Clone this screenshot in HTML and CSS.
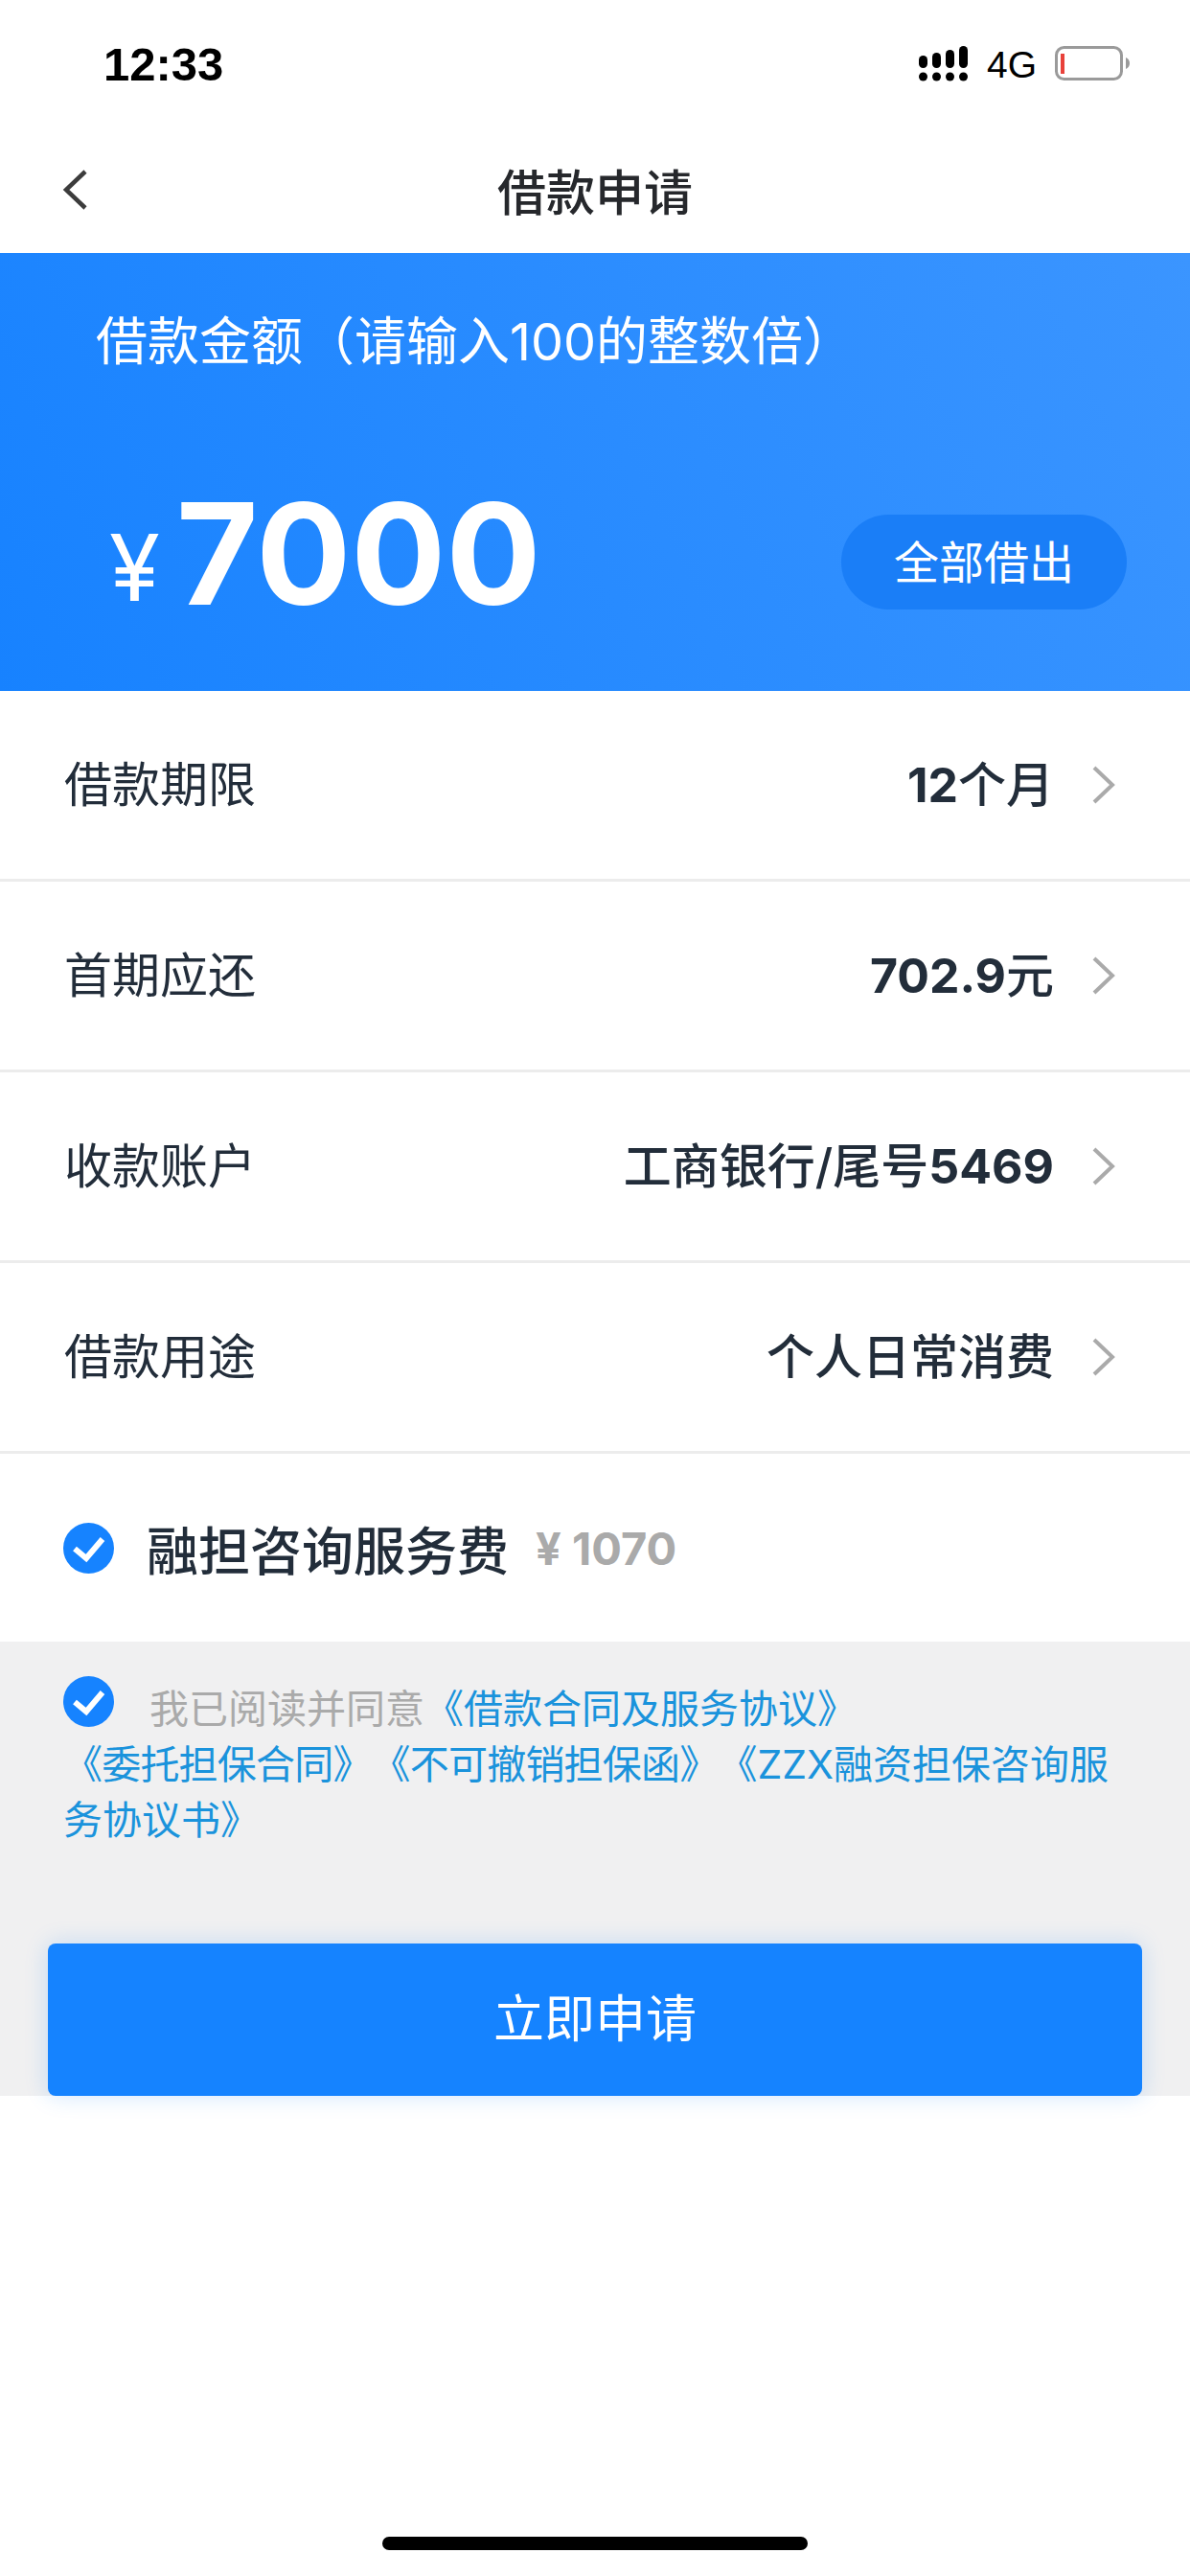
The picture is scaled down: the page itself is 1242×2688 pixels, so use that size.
FILE: index.html

```html
<!DOCTYPE html>
<html lang="zh">
<head>
  <meta charset="UTF-8">
  <title>借款申请</title>
  <link rel="stylesheet" href="styles.css">
</head>
<body>
<div class="page">

  <div class="status-bar">
    <span class="time">12:33</span>
    <div class="status-right">
      <svg class="signal" width="51" height="37" viewBox="0 0 51 37">
        <g fill="#000">
          <rect x="0" y="10" width="9" height="13" rx="4.5"/>
          <rect x="14" y="7" width="9" height="16" rx="4.5"/>
          <rect x="28" y="4" width="9" height="19" rx="4.5"/>
          <rect x="42" y="0" width="9" height="23" rx="4.5"/>
          <circle cx="4.5" cy="32" r="4.5"/>
          <circle cx="18.5" cy="32" r="4.5"/>
          <circle cx="32.5" cy="32" r="4.5"/>
          <circle cx="46.5" cy="32" r="4.5"/>
        </g>
      </svg>
      <span class="net">4G</span>
      <svg class="battery" width="78" height="36" viewBox="0 0 78 36">
        <rect x="1.5" y="1.5" width="68" height="33" rx="8" fill="none" stroke="#9a9a9a" stroke-width="3"/>
        <rect x="6" y="8" width="4" height="21" fill="#e8413a"/>
        <path d="M74 12c2.500 1 4 3 4 6s-1.500 5-4 6z" fill="#9a9a9a"/>
      </svg>
    </div>
  </div>

  <div class="nav">
    <svg class="back" width="26" height="42" viewBox="0 0 26 42">
      <path d="M24 2L4 21l20 19" fill="none" stroke="#3c3c3c" stroke-width="4.500"/>
    </svg>
    <span class="nav-title">借款申请</span>
  </div>

  <div class="hero">
    <div class="hero-title">借款金额（请输入100的整数倍）</div>
    <div class="amount-row">
      <div class="amount"><span class="yen">¥</span><span class="num">7000</span></div>
      <div class="all-btn">全部借出</div>
    </div>
  </div>

  <div class="row">
    <span class="label">借款期限</span>
    <span class="value"><b>12</b>个月</span>
    <svg class="chev" width="24" height="40" viewBox="0 0 24 40"><path d="M2 2l19 18L2 38" fill="none" stroke="#aaa" stroke-width="4"/></svg>
  </div>
  <div class="row">
    <span class="label">首期应还</span>
    <span class="value"><b>702.9</b>元</span>
    <svg class="chev" width="24" height="40" viewBox="0 0 24 40"><path d="M2 2l19 18L2 38" fill="none" stroke="#aaa" stroke-width="4"/></svg>
  </div>
  <div class="row">
    <span class="label">收款账户</span>
    <span class="value">工商银行/尾号<b>5469</b></span>
    <svg class="chev" width="24" height="40" viewBox="0 0 24 40"><path d="M2 2l19 18L2 38" fill="none" stroke="#aaa" stroke-width="4"/></svg>
  </div>
  <div class="row">
    <span class="label">借款用途</span>
    <span class="value">个人日常消费</span>
    <svg class="chev" width="24" height="40" viewBox="0 0 24 40"><path d="M2 2l19 18L2 38" fill="none" stroke="#aaa" stroke-width="4"/></svg>
  </div>

  <div class="fee-row">
    <svg class="check" width="53" height="53" viewBox="0 0 53 53">
      <circle cx="26.500" cy="26.500" r="26.500" fill="#1683ff"/>
      <path d="M12 27l12 10 17-20" fill="none" stroke="#fff" stroke-width="6"/>
    </svg>
    <span class="fee-name">融担咨询服务费</span>
    <span class="fee-price">¥ 1070</span>
  </div>

  <div class="agree">
    <svg class="check agree-check" width="53" height="53" viewBox="0 0 53 53">
      <circle cx="26.500" cy="26.500" r="26.500" fill="#1683ff"/>
      <path d="M12 27l12 10 17-20" fill="none" stroke="#fff" stroke-width="6"/>
    </svg>
    <p class="agree-text"><span class="muted">我已阅读并同意</span><span>《借款合同及服务协议》</span><br><span class="doc">《委托担保合同》</span><span class="doc">《不可撤销担保函》</span><span>《ZZX融资担保咨询服务协议书》</span></p>
    <div class="submit">立即申请</div>
  </div>

  <div class="home-bar"></div>
</div>
</body>
</html>
```

FILE: styles.css

```css
body {
  margin: 0;
  background: #fff;
  font-family: Inter, "Noto Sans CJK SC", sans-serif;
  color: #222d3a;
}
.page {
  display: flex;
  flex-direction: column;
  width: 1242px;
  height: 2688px;
  overflow: hidden;
}
.status-bar {
  display: flex;
  justify-content: space-between;
  align-items: center;
  height: 132px;
  padding: 0 63px 0 108px;
  box-sizing: border-box;
}
.time {
  margin-top: 2px;
  font-family: "Liberation Sans", sans-serif;
  font-size: 49px;
  font-weight: 700;
  color: #000;
}
.status-right {
  display: flex;
  align-items: center;
}
.net {
  margin: 3px 19px 0 20px;
  font-family: "Liberation Sans", sans-serif;
  font-size: 39px;
  color: #000;
}
.nav {
  position: relative;
  display: flex;
  justify-content: center;
  align-items: center;
  height: 132px;
}
.back {
  position: absolute;
  left: 65px;
  top: 45px;
}
.nav-title {
  font-size: 51px;
  font-weight: 500;
  color: #26282c;
}
.hero {
  height: 457px;
  padding: 54px 66px 0 100px;
  box-sizing: border-box;
  background: linear-gradient(65deg, #1782ff, #3b95ff);
  color: #fff;
}
.hero-title {
  font-size: 54px;
  line-height: 78px;
}
.amount-row {
  display: flex;
  justify-content: space-between;
  align-items: center;
  margin-top: 122px;
}
.amount {
  display: flex;
  align-items: baseline;
  margin-left: 14px;
}
.yen {
  width: 70px;
  font-size: 96px;
  font-weight: 400;
  transform: translateY(-4px);
}
.num {
  font-size: 147px;
  font-weight: 700;
  line-height: 120px;
}
.all-btn {
  width: 298px;
  height: 99px;
  border-radius: 50px;
  background: #1a7ef7;
  font-size: 47px;
  line-height: 99px;
  text-align: center;
}
.row {
  display: flex;
  align-items: center;
  height: 199px;
  padding: 0 78px 8px 67px;
  box-sizing: border-box;
  border-bottom: 3px solid #ececec;
}
.label {
  flex: 1;
  font-size: 50px;
}
.value {
  margin-right: 40px;
  font-size: 50px;
  font-weight: 500;
}
.value b {
  font-size: 50px;
  font-weight: 700;
}
.chev {
  margin-top: 8px;
}
.fee-row {
  display: flex;
  align-items: center;
  height: 196px;
  padding-left: 66px;
}
.fee-name {
  margin-left: 34px;
  font-size: 54px;
  font-weight: 500;
}
.fee-price {
  margin-left: 28px;
  font-size: 47px;
  font-weight: 700;
  color: #aaa;
}
.agree {
  position: relative;
  height: 474px;
  padding: 36px 50px 0;
  box-sizing: border-box;
  background: #f0f0f1;
}
.agree-check {
  position: absolute;
  left: 66px;
  top: 36px;
}
.agree-text {
  height: 279px;
  margin: 0;
  padding: 5px 16px 0;
  box-sizing: border-box;
  font-size: 41px;
  line-height: 58px;
  text-indent: 90px;
  text-spacing-trim: space-all;
  color: #1a93dc;
}
.doc {
  letter-spacing: -0.8px;
}
.muted {
  color: #aaa;
}
.submit {
  height: 159px;
  border-radius: 8px;
  background: #1583ff;
  box-shadow: 0 0 24px rgba(21, 131, 255, 0.2);
  color: #fff;
  font-size: 53px;
  line-height: 159px;
  text-align: center;
}
.home-bar {
  width: 444px;
  height: 14px;
  margin: auto auto 27px;
  border-radius: 7px;
  background: #000;
}
```
